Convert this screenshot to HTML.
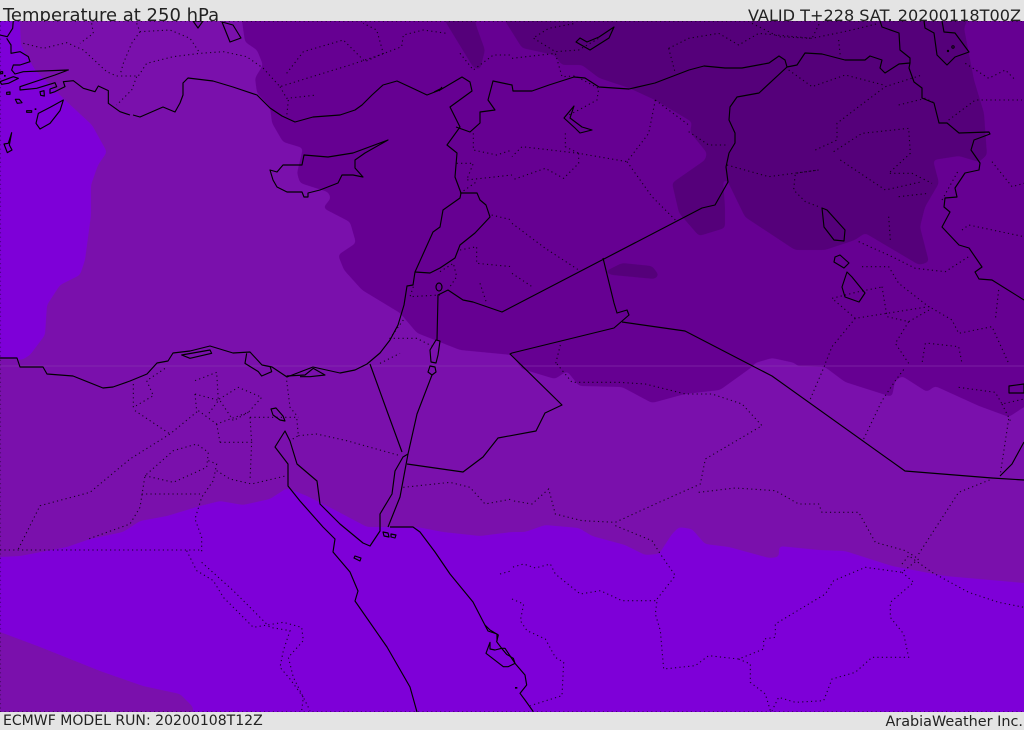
<!DOCTYPE html>
<html><head><meta charset="utf-8"><style>
html,body{margin:0;padding:0;background:#e4e4e4}
body{width:1024px;height:729px;overflow:hidden;position:relative}
.t{position:absolute;font-family:"DejaVu Sans",sans-serif;color:#222;white-space:nowrap;line-height:1}
#m{position:absolute;left:0;top:21px;width:1024px;height:691px;display:block}
.s{fill:none;stroke:#000;stroke-width:1.15;stroke-linejoin:round;vector-effect:non-scaling-stroke}
.d{fill:none;stroke:#000;stroke-width:1.1;stroke-dasharray:1.2 3.2;opacity:.8;vector-effect:non-scaling-stroke}
g polyline,g polygon,g path{vector-effect:non-scaling-stroke}
</style></head><body>
<div class="t" style="left:3px;top:6.5px;font-size:18px">Temperature at 250 hPa</div>
<div class="t" style="right:3px;top:8px;font-size:16.1px">VALID T+228 SAT. 20200118T00Z</div>
<div class="t" style="left:3px;top:714px;font-size:14.05px">ECMWF MODEL RUN: 20200108T12Z</div>
<div class="t" style="right:1px;top:715px;font-size:14.4px">ArabiaWeather Inc.</div>
<svg id="m" viewBox="0 21 1024 691" xmlns="http://www.w3.org/2000/svg">
<defs><filter id="sm" filterUnits="userSpaceOnUse" x="-60" y="-60" width="1150" height="830" color-interpolation-filters="sRGB"><feGaussianBlur stdDeviation="2"/><feComponentTransfer><feFuncA type="linear" slope="9" intercept="-4"/></feComponentTransfer></filter></defs>
<rect x="0" y="21" width="1024" height="691" fill="#7a10ac"/>
<!-- bright -->
<polygon filter="url(#sm)" fill="#7e00d8" points="-20,0 20,0 20,21 21,45 35,70 65,100 92,125 107,152 98,165 91,185 91,215 85,260 80,275 60,285 47,305 45,335 30,355 22,360 0,357 -20,357"/>
<polygon filter="url(#sm)" fill="#7e00d8" points="-20,557 0,557 20,556 67,547 90,539 123,532 140,521 167,516 200,506 220,501 243,505 270,499 287,488 307,496 333,509 367,527 417,527 443,532 480,536 512,532 525,532 545,525 579,528 592,536 625,545 645,555 659,554 672,534 679,527 692,529 705,544 729,547 769,558 779,557 779,546 819,550 845,551 892,566 945,576 1024,583 1044,584 1044,740 -20,740"/>
<polygon filter="url(#sm)" fill="#7a10ac" points="-20,625 0,632 40,647 100,671 143,686 180,694 193,707 193,740 -20,740"/>
<!-- dark -->
<polygon filter="url(#sm)" fill="#660092" points="242,0 242,21 245,42 257,50 263,65 255,78 257,93 270,107 272,123 283,142 303,148 297,173 300,183 328,192 331,198 323,208 350,222 356,243 338,255 344,270 362,290 400,313 417,333 460,350 512,355 522,369 555,379 567,371 579,386 622,387 652,403 685,394 720,390 752,367 755,363 772,358 795,363 797,366 825,367 845,382 892,397 895,381 902,376 927,392 935,386 979,406 1009,417 1024,407 1044,400 1044,0"/>
<!-- darkest -->
<polygon filter="url(#sm)" fill="#55007a" points="445,0 445,21 473,67 480,70 485,50 477,28 475,21 475,0"/>
<polygon filter="url(#sm)" fill="#55007a" points="505,0 505,21 512,32 522,48 554,55 562,65 582,65 599,78 629,88 655,100 692,122 690,132 707,153 705,160 672,183 679,213 699,236 725,228 725,207 723,180 727,180 745,217 795,250 825,250 855,240 865,233 919,265 929,262 920,227 925,207 939,183 933,160 959,156 979,162 987,155 984,113 974,80 964,28 967,21 967,0"/>
<polygon filter="url(#sm)" fill="#55007a" points="604,272 622,263 652,266 659,275 655,279 612,275"/>
<line x1="0" y1="366" x2="1024" y2="366" stroke="#8a3ab0" stroke-width="1" opacity=".55"/>
<line x1="0.5" y1="21" x2="0.5" y2="712" class="d" style="opacity:.35"/>
<line x1="0" y1="711.5" x2="1024" y2="711.5" class="d" style="opacity:.4"/>
<line x1="0" y1="21.5" x2="1024" y2="21.5" class="d" style="opacity:.5"/>

<!-- dotted, top-left quadrant -->
<g transform="scale(.33333)">
<polyline class="d" points="70,130 130,145 200,128 250,150 320,215 350,228 415,228 440,190 520,170 600,160 670,155 740,170 790,205 840,260 920,235 1050,195 1140,165 1205,140 1210,105 1270,90 1340,100"/>
<polyline class="d" points="275,70 280,100 240,130"/>
<polyline class="d" points="410,70 420,95 510,90 570,115 600,160"/>
<polyline class="d" points="420,95 395,130 370,190 360,225"/>
<polyline class="d" points="410,230 395,270 350,315"/>
<polyline class="d" points="840,260 860,295 950,285"/>
<polyline class="d" points="860,220 910,155 1030,120 1095,185 1150,160 1130,90 1090,70"/>
<polyline class="d" points="865,300 860,350"/>
<polyline class="d" points="1380,160 1420,210 1480,165 1536,165"/>
<polyline class="d" points="1420,400 1420,450 1490,465 1536,450"/>
<polyline class="d" points="1370,490 1420,490 1400,540 1536,525"/>
<polyline class="d" points="1380,580 1430,545"/>
<polyline class="d" points="1475,645 1536,660"/>
<polyline class="d" points="1380,750 1430,740 1430,790 1536,800"/>
<polyline class="d" points="1320,815 1360,790 1370,830 1350,860"/>
<polyline class="d" points="1440,850 1460,910"/>
<polyline class="d" points="1240,860 1230,890 1320,885"/>
<polyline class="d" points="1210,960 1170,1015 1250,1015 1300,1040"/>
<polyline class="d" points="1140,1090 1200,1060"/>
</g>
<!-- dotted, top-right quadrant -->
<g transform="translate(512,0) scale(.33333)">
<polyline class="d" points="70,110 110,85 190,70"/>
<polyline class="d" points="65,115 130,155 200,150 260,115"/>
<polyline class="d" points="470,145 530,115 620,100 680,135 740,100 900,115 925,65"/>
<polyline class="d" points="470,145 490,220"/>
<polyline class="d" points="720,70 800,110 900,115 1020,90 1100,70"/>
<polyline class="d" points="980,120 985,170"/>
<polyline class="d" points="0,175 130,160 150,230 190,228 260,265 255,300 200,330 170,345"/>
<polyline class="d" points="430,300 410,400 345,485 200,460 30,440 0,470"/>
<polyline class="d" points="200,460 200,490 155,535 100,505 0,540"/>
<polyline class="d" points="345,485 420,590 490,660"/>
<polyline class="d" points="160,400 160,440 200,460"/>
<polyline class="d" points="430,300 530,375"/>
<polyline class="d" points="530,395 590,435 650,435"/>
<polyline class="d" points="645,495 770,530 920,510 850,520 845,570 880,605 920,620"/>
<polyline class="d" points="910,450 975,420 975,370 1040,320 1120,260 1230,225"/>
<polyline class="d" points="830,210 900,260 1000,225 1115,255"/>
<polyline class="d" points="965,455 1050,400 1190,385 1195,460 1130,520 1200,520 1260,550"/>
<polyline class="d" points="985,480 1120,570 1230,545"/>
<polyline class="d" points="1160,315 1240,295 1270,310"/>
<polyline class="d" points="1160,590 1250,580"/>
<polyline class="d" points="1130,650 1135,720"/>
<polyline class="d" points="1310,360 1390,300 1530,300"/>
<polyline class="d" points="1360,190 1430,235 1480,210 1510,240"/>
<polyline class="d" points="1440,485 1500,560 1536,550"/>
<polyline class="d" points="1290,600 1340,510"/>
<polyline class="d" points="1040,725 1140,770 1210,805 1300,815 1370,770"/>
<polyline class="d" points="1050,800 1130,800 1160,850 1250,920 1030,955 960,895 1040,875 1115,860"/>
<polyline class="d" points="1110,860 1125,950 1190,965 1260,925 1320,960 1340,1000 1440,980 1490,1090"/>
<polyline class="d" points="1190,965 1150,1030 1190,1090"/>
<polyline class="d" points="1030,955 960,1040 940,1090"/>
<polyline class="d" points="1250,1030 1340,1040 1350,1090"/>
<polyline class="d" points="1240,1030 1230,1090"/>
<polyline class="d" points="1350,690 1370,675 1536,710"/>
<polyline class="d" points="1460,870 1450,960"/>
<polyline class="d" points="0,670 100,745 200,810"/>
<polyline class="d" points="0,820 60,860"/>
<polyline class="d" points="145,1035 130,1095"/>
</g>
<!-- dotted, bottom-left quadrant -->
<g transform="translate(0,364) scale(.33333)">
<polyline class="d" points="0,558 605,558"/>
<polyline class="d" points="55,555 120,425 270,385 390,285 510,210 595,140"/>
<polyline class="d" points="400,60 400,130 460,95 440,50 500,10"/>
<polyline class="d" points="405,140 510,210"/>
<polyline class="d" points="595,140 650,180 745,145 785,100 715,70 650,110"/>
<polyline class="d" points="585,50 650,25 655,110 625,150"/>
<polyline class="d" points="585,90 590,140"/>
<polyline class="d" points="585,90 660,110 700,170 745,145"/>
<polyline class="d" points="750,160 890,160 895,215 870,230"/>
<polyline class="d" points="660,235 755,235 750,350"/>
<polyline class="d" points="750,160 755,235"/>
<polyline class="d" points="650,180 660,235"/>
<polyline class="d" points="435,335 520,355 620,310 625,265 590,240 520,260 435,335 420,430 390,480 265,525"/>
<polyline class="d" points="425,390 600,390"/>
<polyline class="d" points="625,290 650,300 640,350 605,400 585,465 605,520 605,565"/>
<polyline class="d" points="650,320 690,345 755,360 860,335"/>
<polyline class="d" points="860,50 870,130 895,160"/>
<polyline class="d" points="895,215 950,210 1040,230 1200,275"/>
<polyline class="d" points="1210,370 1350,355 1410,370 1455,420 1536,405"/>
<polyline class="d" points="560,560 590,620 640,650 670,700 760,790 850,775 905,790 910,830 865,880 880,940 930,1040"/>
<polyline class="d" points="605,595 700,680 810,790 870,800 850,860 840,910 870,945 910,1000 905,1040"/>
<polyline class="d" points="1500,630 1536,620"/>
</g>
<!-- dotted, bottom-right quadrant -->
<g transform="translate(512,364) scale(.33333)">
<polyline class="d" points="135,0 180,55 320,55 400,60 520,90 600,90 690,120 750,185 580,285 565,360 430,420 310,475 210,470 130,450 110,375 60,420 0,410"/>
<polyline class="d" points="560,385 670,372 790,380 860,420 920,420 930,445 1040,445 1090,535 1180,560 1220,585 1170,625 1060,610 965,650 940,690 790,780 790,820 755,825 755,855 680,885 590,875 550,905 455,915 445,800 430,750 435,710 330,710 265,680 205,690 130,630 115,600 70,612 35,600 0,610"/>
<polyline class="d" points="310,485 420,530 445,570 490,635 435,705"/>
<polyline class="d" points="1220,570 1340,385 1440,345"/>
<polyline class="d" points="1170,625 1205,655 1135,715 1135,760 1175,810 1190,880 1080,880 1030,925 960,945 935,1010 850,1015 800,1000 780,1040"/>
<polyline class="d" points="680,885 715,900 715,955 760,990 775,1040"/>
<polyline class="d" points="1170,600 1190,575 1260,625 1370,685 1460,715 1536,730"/>
<polyline class="d" points="895,105 940,0"/>
<polyline class="d" points="1055,225 1110,110 1150,50 1180,10"/>
<polyline class="d" points="1490,165 1465,330"/>
<polyline class="d" points="1340,70 1450,85 1470,120 1536,105"/>
<polyline class="d" points="1470,120 1495,170"/>
<polyline class="d" points="0,705 35,720 25,770 45,800 100,825 130,880 155,895 150,995 55,1025"/>
</g>

<!-- solid: Aegean -->
<g transform="translate(0,20) scale(.33333)">
<polyline class="s" points="40,0 38,25 22,50 0,45"/>
<polyline class="s" points="20,55 33,75 33,100 60,95 85,110 90,125 60,135 40,135 35,150 45,162 70,155 205,150 165,165 60,200 60,210 110,205 165,188 170,200 150,207 150,220 165,215 195,200 190,185 220,182 250,205 285,215 295,198 325,212 325,250 360,275 390,285"/>
<polygon class="s" points="190,240 150,262 115,280 108,310 120,327 150,310 180,272"/>
<polygon class="s" points="0,185 40,170 55,175 25,190 5,193"/>
<polygon class="s" points="120,215 132,212 133,228 122,226"/>
<polygon class="s" points="20,217 30,216 30,223 20,223"/>
<polygon class="s" points="46,238 58,238 66,248 52,250"/>
<polygon class="s" points="80,272 95,272 95,277 80,277"/>
<polygon class="s" points="35,338 25,370 12,372 22,398 36,390 28,375"/>
<rect x="12" y="165" width="5" height="5" fill="#000"/><rect x="2" y="155" width="6" height="6" class="s"/><rect x="104" y="265" width="5" height="5" fill="#000"/>
</g>
<polygon class="s" points="193,21 198,28 203,21"/>
<polygon class="s" points="222,22 230,42 241,38 233,25"/>
<polyline class="s" points="0,358 17,358 20,367 43,367 47,374 73,376 103,388 113,387 130,381 147,374 157,363 168,361 173,353 190,351 210,346 233,353 250,352 262,365 272,367 287,377 300,372 313,367 340,373 355,370 367,364 380,353 390,340 398,325 404,305 407,286 413,285 415,272 433,232 440,227 443,210 460,198 461,193 455,177 457,153 447,145 460,127 450,107 472,91 470,82 462,77 440,90 427,95 410,87 397,81 383,85 372,95 362,105 355,110 340,115 313,117 295,122 282,116 270,108 257,95 233,87 213,81 188,78 183,83 183,95 180,103 175,112 163,107 140,117 133,115"/>
<!-- delta lagoons -->
<g transform="translate(140,340) scale(.33333)">
<polygon class="s" points="125,45 210,30 215,40 150,55"/>
<polyline class="s" points="320,40 315,70 355,95 365,108 395,95 390,78"/>
<polyline class="s" points="440,108 495,105 520,85 555,105 510,110 480,110"/>
</g>
<path class="s" d="M440 89l-6 3M442 87l-3 4"/>
<!-- Cyprus -->
<polygon class="s" points="270,170 277,172 283,165 302,165 304,155 328,157 353,153 388,140 365,153 355,160 355,168 363,177 353,175 342,175 338,183 320,190 308,193 308,197 304,197 302,192 287,192 277,187 273,180"/>
<!-- Turkey/Syria/Iraq/Iran -->
<polyline class="s" points="456,127 470,132 480,123 480,112 495,110 488,100 493,81 512,85 513,91 532,91 549,85 574,77 585,78 599,87 629,89 655,83 689,70 704,66 725,68 742,68 769,63 779,56 785,60 787,67 797,65 805,53 822,54 845,60 865,60 870,56 882,60 880,68 885,73 899,64 910,63 909,68 914,82 922,88 922,98 934,103 939,123 947,123 959,133 989,132 990,134 974,140 971,150 980,163 979,170 965,173 955,188 957,197 945,198 944,207 950,212 942,227 959,245 969,248 982,267 975,272 979,279 992,280 1024,300"/>
<polyline class="s" points="880,21 882,27 899,33 900,50 910,58 910,63"/>
<polyline class="s" points="924,21 925,28 934,33 937,55 947,65 955,57 969,52 955,33 944,32 942,21"/>
<polyline class="s" points="787,67 759,93 737,97 730,107 729,120 735,133 735,143 729,153 726,167 728,182 715,205 702,208 502,312 473,302 463,300 448,290 438,295 437,340"/>
<polyline class="s" points="603,258 614,303 617,313 627,310 629,315 614,328 512,353 510,354 562,405 545,413 536,431 498,438 483,457 463,472 407,464"/>
<polyline class="s" points="622,322 685,331 772,376 905,471 992,478 1024,480"/>
<polyline class="s" points="1000,476 1012,464 1024,442"/>
<polyline class="s" points="415,272 430,273 440,268 455,258 460,245 475,233 490,217 486,205 480,200 477,193 461,193"/>
<!-- Dead Sea, Tiberias -->
<ellipse class="s" cx="439" cy="287" rx="3" ry="4"/>
<polygon class="s" points="436,340 440,341 438,355 436,363 431,362 430,350"/>
<polygon class="s" points="430,366 435,367 436,372 432,375 428,372"/>
<!-- Suez, Aqaba -->
<polyline class="s" points="432,375 417,414 408,454 400,497 388,527"/>
<polyline class="s" points="370,364 387,411 402,452"/>
<polyline class="s" points="408,454 403,457 395,471 392,494 380,514 380,531 370,546 363,543 340,524 320,504 317,481 297,464 290,441 285,431 275,447 288,464 288,486 300,501 323,527 335,539 333,552 350,572 358,591 355,601 387,647 410,687 417,712"/>
<polyline class="s" points="390,527 413,527 420,532 435,552 450,574 473,602 488,631 497,634 497,641"/>
<polygon class="s" points="271,409 276,408 283,416 285,421 280,420 273,415"/>
<polygon class="s" points="355,556 361,558 360,561 354,558"/>
<polygon class="s" points="383,532 388,533 389,537 384,536"/><polygon class="s" points="391,534 396,535 395,538 391,537"/>
<!-- Farasan / Saudi south -->
<g transform="translate(470,625) scale(.33333)">
<polyline class="s" points="45,0 60,15 85,30 80,50 95,70 105,70 135,115 165,150 170,180 150,205 165,225 190,260"/>
<polygon class="s" points="60,52 48,85 100,125 115,125 135,115 130,100 110,88 95,70 75,75 60,72"/>
<rect x="135" y="186" width="7" height="5" fill="#000"/>
</g>
<!-- lakes -->
<polygon class="s" points="574,106 564,118 575,128 580,133 592,130 582,127 570,118"/>
<polygon class="s" points="576,42 590,50 609,38 614,27 599,37 587,42 580,38"/>
<polygon class="s" points="822,208 824,227 834,240 844,241 845,230 827,210"/>
<polygon class="s" points="835,257 840,255 849,263 844,268 834,262"/>
<polygon class="s" points="847,272 842,287 845,297 859,302 865,293 852,277"/>
<polygon class="s" points="1009,386 1024,384 1024,393 1009,393"/>
<circle cx="948" cy="51" r="1.2" fill="#000"/><circle cx="953" cy="47" r="1.2" fill="none" stroke="#000"/>
</svg>
</body></html>
